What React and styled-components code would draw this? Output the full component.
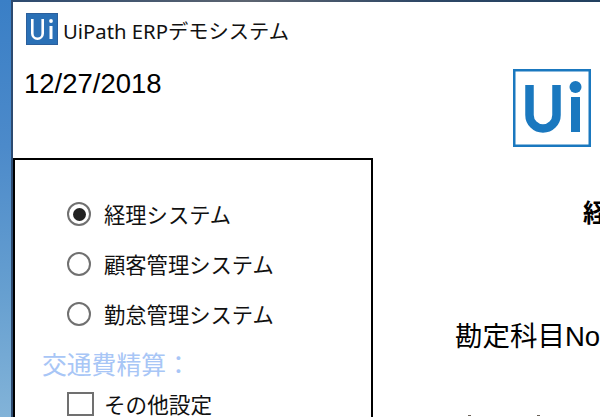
import React from 'react';
import styled, { createGlobalStyle } from 'styled-components';

const GlobalStyle = createGlobalStyle`
  html, body {
    margin: 0;
    padding: 0;
    background: #fff;
  }
`;

const cjk = '"Noto Sans CJK JP", sans-serif';

const Desktop = styled.div`
  width: 600px;
  height: 417px;
  overflow: hidden;
  box-sizing: border-box;
  padding-left: 11px;
  background: linear-gradient(180deg, #3a7fc6 0%, #4c8aca 35%, #669fd0 70%, #82b3d8 100%);
`;

const Window = styled.div`
  height: 417px;
  box-sizing: border-box;
  background: #fff;
  border-left: 2px solid #2f5079;
  border-top: 2px solid transparent;
  border-image: linear-gradient(90deg, #2c4a70 0%, #5c6470 40%, #2d4766 70%, #22405f 100%) 2;
  overflow: hidden;
`;

const TitleBar = styled.div`
  display: flex;
  align-items: center;
  gap: 5px;
  height: 32px;
  padding: 11px 0 0 13px;
`;

const TitleText = styled.span`
  padding-top: 4px;
  font-family: "Noto Sans", ${cjk};
  font-size: 20.3px;
  line-height: 32px;
  color: #111;
  white-space: nowrap;
`;

const Body = styled.div`
  display: grid;
  grid-template-columns: 360px 1fr;
`;

const LeftColumn = styled.div`
  display: flex;
  flex-direction: column;
`;

const DateText = styled.div`
  height: 113px;
  padding: 23px 0 0 11px;
  box-sizing: border-box;
  font-family: "Liberation Sans", Arial, sans-serif;
  font-size: 27.5px;
  line-height: 32px;
  color: #000;
`;

const Panel = styled.div`
  box-sizing: border-box;
  width: 360px;
  height: 300px;
  border: 2px solid #000;
  padding: 29px 0 0 27px;
  display: flex;
  flex-direction: column;
`;

const OptionRow = styled.label`
  display: flex;
  align-items: center;
  height: 50px;
  gap: 13px;
  padding-left: 25px;
  font-family: ${cjk};
  font-size: 21.3px;
  color: #111;
  white-space: nowrap;
`;

const OptionText = styled.span`
  padding-bottom: 2px;
`;

const Radio = styled.span`
  box-sizing: border-box;
  width: 24px;
  height: 24px;
  border-radius: 50%;
  border: 2px solid #707070;
  display: flex;
  align-items: center;
  justify-content: center;

  &::after {
    content: '';
    width: 13px;
    height: 13px;
    border-radius: 50%;
    background: ${(props) => (props.$checked ? '#222' : 'transparent')};
  }
`;

const SectionLabel = styled.div`
  height: 50px;
  line-height: 48px;
  font-family: ${cjk};
  font-size: 24.8px;
  color: #a8c6f6;
  white-space: nowrap;
`;

const CheckRow = styled(OptionRow)`
  height: 30px;
  align-items: flex-start;
  gap: 10px;
  padding-top: 3px;
  font-size: 21.6px;
  line-height: 24px;
`;

const CheckBox = styled.span`
  box-sizing: border-box;
  flex: none;
  width: 27px;
  height: 24px;
  border: 2px solid #707070;
`;

const RightColumn = styled.div`
  display: flex;
  flex-direction: column;
  padding-top: 24px;
`;

const LogoBox = styled.div`
  box-sizing: border-box;
  width: 78px;
  height: 78px;
  margin-left: 140px;
  flex: none;
  filter: blur(0.4px);
`;

const Heading = styled.div`
  margin: 49px 0 0 210px;
  height: 30px;
  line-height: 30px;
  font-family: ${cjk};
  font-size: 25px;
  font-weight: 700;
  color: #000;
  white-space: nowrap;
`;

const FieldLabel = styled.div`
  margin: 93px 0 0 82px;
  height: 36px;
  line-height: 36px;
  font-family: "Liberation Sans", ${cjk};
  font-size: 27.5px;
  color: #000;
  white-space: nowrap;
`;

const ClippedRow = styled.div`
  display: flex;
  gap: 66px;
  margin: 60px 0 0 95px;
`;

const ClippedMark = styled.span`
  width: 3px;
  height: 1px;
  background: #6b6258;
`;

const SmallLogo = () => (
  <svg width="32" height="32" viewBox="0 0 32 32">
    <rect x="0.5" y="0.5" width="31" height="31" fill="#2a70b6" stroke="#2b5f9c" />
    <path d="M6.3 6V20.5a5.2 5.2 0 0 0 10.4 0V6" fill="none" stroke="#fff" strokeWidth="2.6" />
    <rect x="23.5" y="13" width="3" height="13" fill="#fff" />
    <circle cx="25" cy="8" r="1.9" fill="#fff" />
  </svg>
);

const BigLogo = () => (
  <svg width="78" height="78" viewBox="0 0 78 78">
    <rect x="1.25" y="1.25" width="75.5" height="75.5" fill="#fff" stroke="#1a78bf" strokeWidth="2.5" />
    <path d="M16.5 16V46a13.5 13.5 0 0 0 27 0V16" fill="none" stroke="#1a78bf" strokeWidth="8.5" />
    <rect x="58" y="28" width="9" height="35" fill="#1a78bf" />
    <circle cx="62.5" cy="18" r="6" fill="#1a78bf" />
  </svg>
);

const App = () => {
  return (
    <Desktop>
      <GlobalStyle />
      <Window>
        <TitleBar>
          <SmallLogo />
          <TitleText>UiPath ERPデモシステム</TitleText>
        </TitleBar>
        <Body>
          <LeftColumn>
            <DateText>12/27/2018</DateText>
            <Panel>
              <OptionRow><Radio $checked /><OptionText>経理システム</OptionText></OptionRow>
              <OptionRow><Radio /><OptionText>顧客管理システム</OptionText></OptionRow>
              <OptionRow><Radio /><OptionText>勤怠管理システム</OptionText></OptionRow>
              <SectionLabel>交通費精算：</SectionLabel>
              <CheckRow><CheckBox />その他設定</CheckRow>
            </Panel>
          </LeftColumn>
          <RightColumn>
            <LogoBox><BigLogo /></LogoBox>
            <Heading>経理システム</Heading>
            <FieldLabel>勘定科目No</FieldLabel>
            <ClippedRow>
              <ClippedMark />
              <ClippedMark />
              <ClippedMark />
            </ClippedRow>
          </RightColumn>
        </Body>
      </Window>
    </Desktop>
  );
};

export default App;
